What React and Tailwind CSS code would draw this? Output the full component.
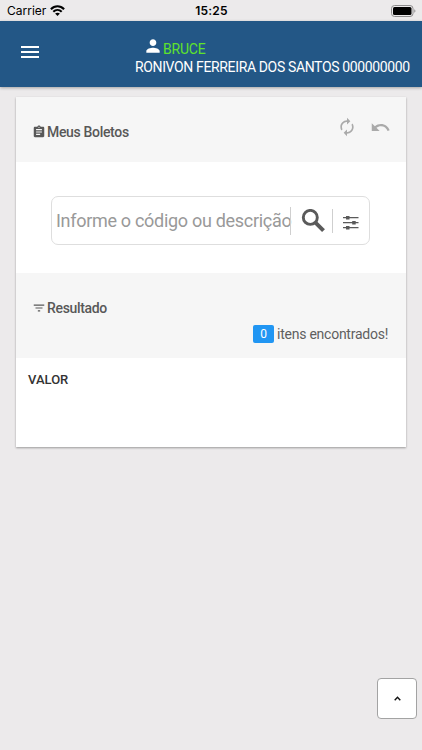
import React from 'react';
import { MdPerson, MdAssignment, MdAutorenew, MdUndo, MdFilterList } from 'react-icons/md';

const StatusBar = () => {
    return (
        <div className="flex h-[21px] items-center justify-between pl-[7px] pr-[6px] text-black font-['Inter','Liberation_Sans',sans-serif]">
            <div className="flex w-[120px] items-center gap-[4px]">
                <span className="text-[12px] leading-[21px]">Carrier</span>
                <svg width="15" height="11" viewBox="0 0 15 11" fill="none" stroke="currentColor" strokeWidth="2.1">
                    <path d="M0.9 4.2C4.7 0.3 10.3 0.3 14.1 4.2" />
                    <path d="M3.3 6.7C5.7 4.4 9.3 4.4 11.7 6.7" />
                    <path d="M7.5 11L5.1 8.6C6.5 7.5 8.5 7.5 9.9 8.6Z" fill="currentColor" stroke="none" />
                </svg>
            </div>
            <span className="text-[12px] font-semibold leading-[21px] tracking-[0.2px]">15:25</span>
            <div className="flex w-[120px] justify-end">
                <svg width="25" height="12" viewBox="0 0 25 12">
                    <rect x="0.5" y="0.5" width="21.5" height="11" rx="3" fill="none" stroke="#8d8c8d" />
                    <rect x="2" y="2" width="18.5" height="8" rx="1.5" fill="#000" />
                    <path d="M23.3 4.2C24.8 4.8 24.8 7.2 23.3 7.8Z" fill="#8d8c8d" />
                </svg>
            </div>
        </div>
    );
};

const Header = () => {
    return (
        <header className="flex h-[66px] items-start justify-between bg-[#235786] pl-[21px] pr-[11px] shadow-[0_1px_3px_rgba(0,0,0,0.3)]">
            <button className="mt-[25px] flex w-[18px] flex-col gap-[3px]">
                <span className="h-[2px] w-full bg-white" />
                <span className="h-[2px] w-full bg-white" />
                <span className="h-[2px] w-full bg-white" />
            </button>
            <div className="w-[276px] pt-[15px] text-[14px] leading-[18px] tracking-[-0.36px] text-white">
                <div className="flex h-[22px] items-start pl-[8px]">
                    <MdPerson className="size-[20px] shrink-0" />
                    <span className="pt-[4px] tracking-[-0.2px] text-[#5fe32c]">BRUCE</span>
                </div>
                <div className="whitespace-nowrap">RONIVON FERREIRA DOS SANTOS 000000000</div>
            </div>
        </header>
    );
};

const SearchBox = () => {
    return (
        <div className="flex h-[49px] items-center rounded-[7px] border border-[#dedede] pl-[4px] text-[#5a5a5a]">
            <div className="w-[234px] whitespace-nowrap text-[18px] leading-[26px] tracking-[-0.3px] text-[#999]">
                Informe o código ou descrição
            </div>
            <div className="h-[28px] w-px bg-[#cfcfcf]" />
            <svg className="ml-[10px]" width="24" height="24" viewBox="0 0 24 24" fill="none" stroke="currentColor">
                <circle cx="9.3" cy="8.4" r="7" strokeWidth="2.9" />
                <path d="M14.2 13.4L22.5 21.7" strokeWidth="4" />
            </svg>
            <div className="ml-[7px] h-[24px] w-px bg-[#cfcfcf]" />
            <svg className="ml-[10px] mt-[4px]" width="16" height="16" viewBox="0 0 16 16" fill="currentColor">
                <path d="M0 2h15.5v1.3H0zM0 7h15.5v1.3H0zM0 12h15.5v1.3H0z" />
                <path d="M3 1h3.5v3.4H3zM9.2 6h3.5v3.4H9.2zM3 11h3.5v3.4H3z" />
            </svg>
        </div>
    );
};

const App = () => {
    return (
        <div className="flex h-[750px] w-[422px] flex-col bg-[#eceaeb] font-['Roboto','Liberation_Sans',sans-serif]">
            <StatusBar />
            <Header />

            <main className="mx-[16px] mt-[10px] h-[350px] w-[390px] bg-white shadow-[0_1px_2px_rgba(0,0,0,0.35)]">
                <div className="flex h-[65px] justify-between bg-[#f6f6f6] pl-[16px] pr-[15px]">
                    <h2 className="flex h-[70px] items-center gap-[1px] text-[14px] font-medium tracking-[-0.33px] text-[#585858]">
                        <MdAssignment className="size-[14px]" />
                        Meus Boletos
                    </h2>
                    <div className="flex h-[60px] items-center gap-[13px] text-[#aaa]">
                        <MdAutorenew className="size-[20px]" />
                        <MdUndo className="size-[21px]" />
                    </div>
                </div>

                <div className="h-[111px] pl-[35px] pr-[36px] pt-[34px]">
                    <SearchBox />
                </div>

                <div className="h-[85px] bg-[#f6f6f6] pl-[16px] pr-[18px] pt-[25px]">
                    <h2 className="flex h-[20px] items-center gap-[1px] text-[14px] font-medium tracking-[-0.33px] text-[#585858]">
                        <MdFilterList className="size-[14px]" />
                        Resultado
                    </h2>
                    <div className="mt-[7px] flex h-[18px] items-center justify-end gap-[3px] text-[14px] tracking-[-0.25px] text-[#5f5f5f]">
                        <span className="h-[18px] w-[21px] rounded-[2px] bg-[#2196f3] text-center text-[12px] leading-[18px] text-white">0</span>
                        <span>itens encontrados!</span>
                    </div>
                </div>

                <div className="px-[12px] pt-[12px] text-[13px] font-medium leading-[20px] text-[#333]">VALOR</div>
            </main>

            <div className="mt-auto flex justify-end pb-[31px] pr-[5px]">
                <button className="flex h-[41px] w-[40px] items-center justify-center rounded-[4px] border border-[#a3a3a3] bg-white">
                    <svg width="7" height="5" viewBox="0 0 7 5" fill="none" stroke="#111" strokeWidth="1.4">
                        <path d="M0.7 4.2L3.5 1.3L6.3 4.2" />
                    </svg>
                </button>
            </div>
        </div>
    );
};

export default App;
